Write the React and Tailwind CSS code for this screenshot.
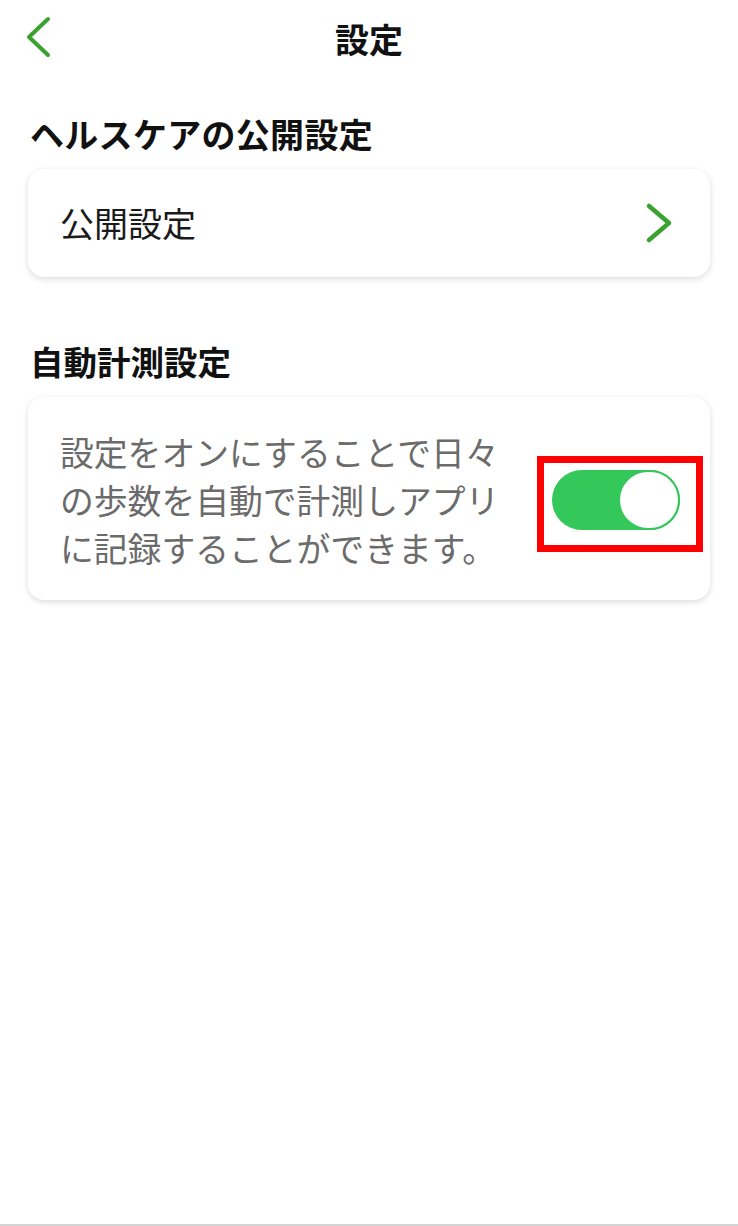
const font = {
  fontFamily: '"Noto Sans CJK JP", "Noto Sans", sans-serif',
};

function ChevronLeft() {
  return (
    <svg width="26" height="42" viewBox="0 0 26 42" fill="none">
      <polyline
        points="23,3 4,21 23,39"
        stroke="#3ba22f"
        strokeWidth="4"
        strokeLinecap="round"
        strokeLinejoin="round"
      />
    </svg>
  );
}

function ChevronRight() {
  return (
    <svg width="30" height="42" viewBox="0 0 30 42" fill="none">
      <polyline
        points="5,4 25,21 5,38"
        stroke="#3ba22f"
        strokeWidth="4.5"
        strokeLinecap="round"
        strokeLinejoin="round"
      />
    </svg>
  );
}

function Toggle() {
  return (
    <div className="relative">
      <div className="flex h-[60px] w-[128px] items-center justify-end rounded-full bg-[#34c759]">
        <div className="h-[60px] w-[62px] rounded-full border-2 border-[#34c759] bg-white" />
      </div>
      {/* annotation box */}
      <div className="pointer-events-none absolute left-[-15px] top-[-14px] h-[96px] w-[166px] border-[7px] border-[#ff0000]" />
    </div>
  );
}

export default function App() {
  return (
    <div
      className="flex h-[1226px] w-full flex-col border-b-2 border-[#d4d4d4] bg-white"
      style={font}
    >
      {/* header */}
      <div className="relative flex h-[78px] items-center justify-center">
        <div className="absolute left-[25px] top-[16px]">
          <ChevronLeft />
        </div>
        <h1 className="text-[34px] font-bold leading-none text-[#111]">設定</h1>
      </div>

      <div className="px-[28px]">
        <h2 className="mt-[39px] pl-[2px] text-[34px] font-bold leading-[34px] tracking-[0.3px] text-[#111]">
          ヘルスケアの公開設定
        </h2>

        <div className="mt-[18px] flex h-[108px] items-center justify-between rounded-[16px] bg-white pl-[32px] pr-[36px] shadow-[0_2px_6px_rgba(0,0,0,0.14)]">
          <span className="text-[34px] leading-none text-[#1a1a1a]">公開設定</span>
          <ChevronRight />
        </div>

        <h2 className="mt-[67px] pl-[2px] text-[33.5px] font-bold leading-[34px] text-[#111]">
          自動計測設定
        </h2>

        <div className="mt-[19px] flex items-center justify-between rounded-[16px] bg-white pb-[28px] pl-[32px] pr-[30px] pt-[31px] shadow-[0_2px_6px_rgba(0,0,0,0.14)]">
          <p className="w-[452px] text-[33.8px] leading-[48px] text-[#6b6b6b]">
            設定をオンにすることで日々の歩数を自動で計測しアプリに記録することができます。
          </p>
          <Toggle />
        </div>
      </div>

      <div className="flex-1" />
    </div>
  );
}
